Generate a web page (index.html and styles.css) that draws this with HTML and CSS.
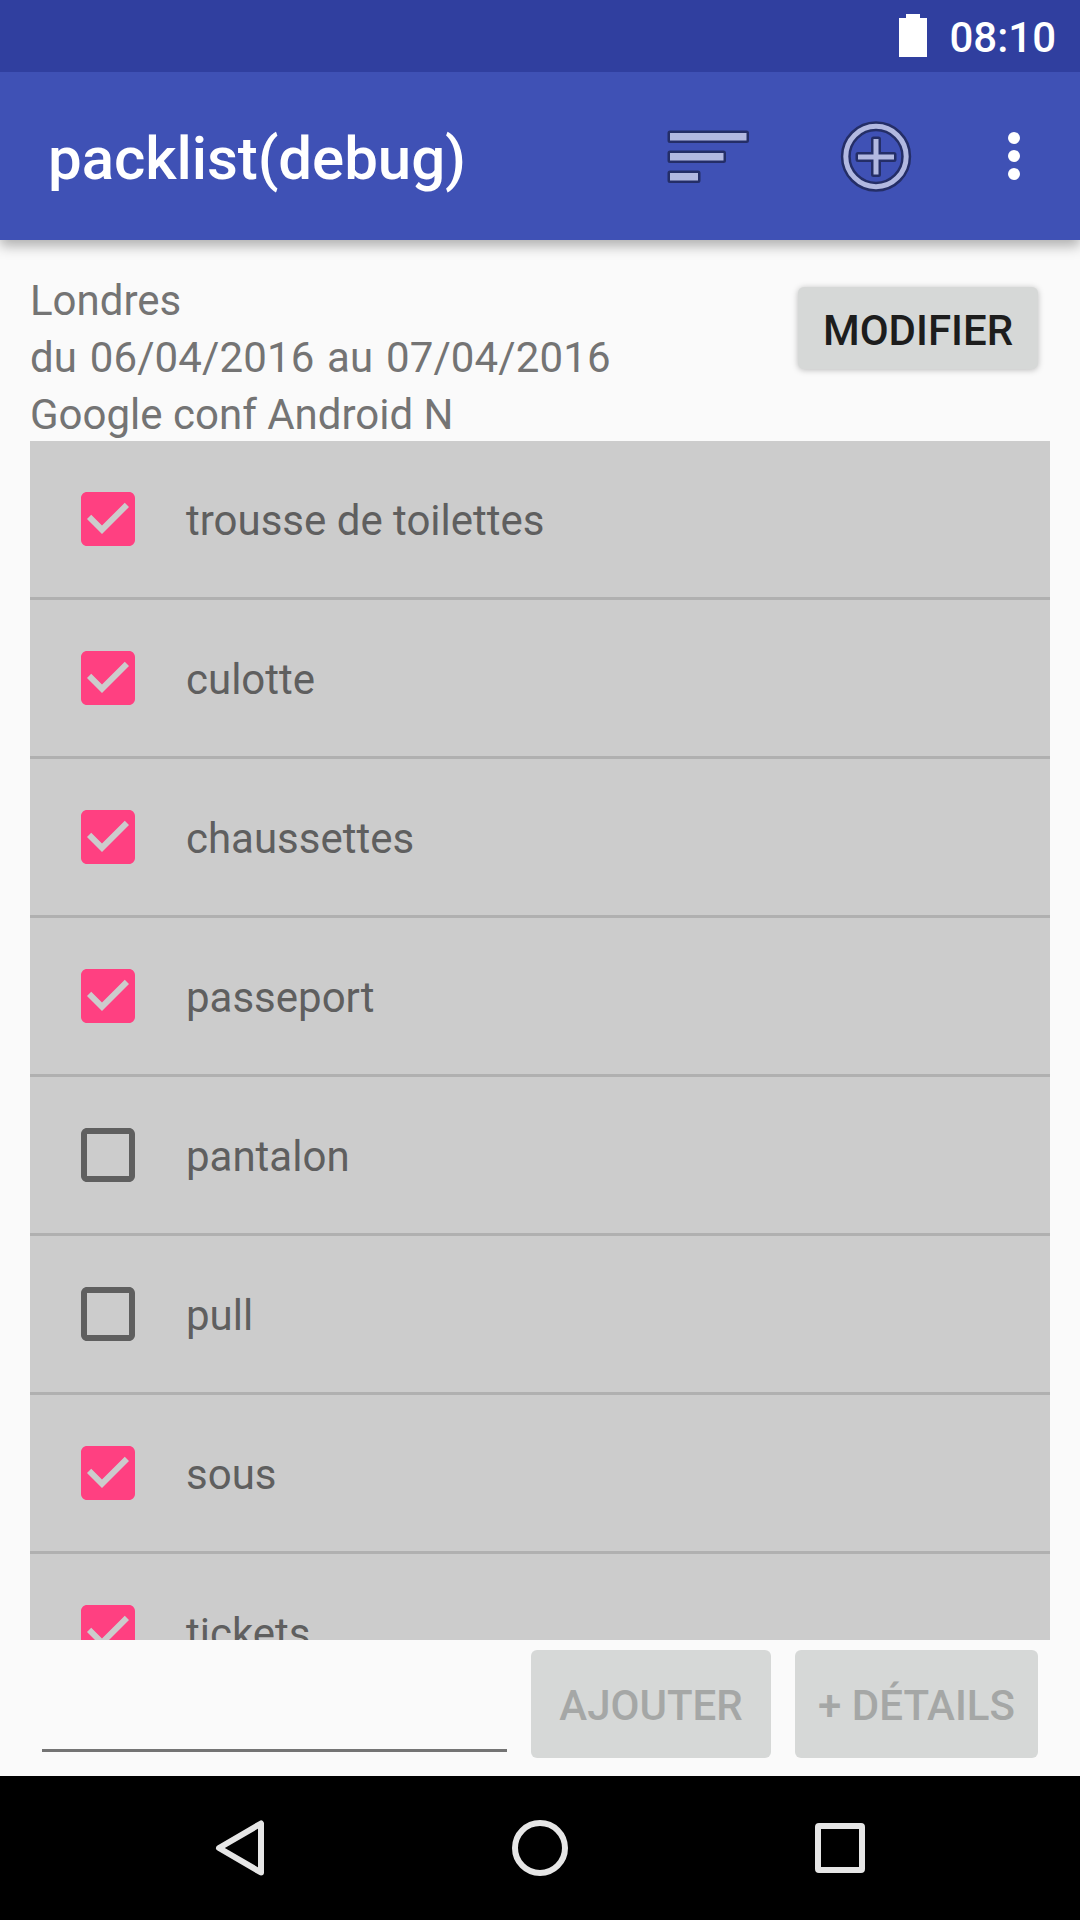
FILE: index.html
```html
<!DOCTYPE html>
<html lang="fr">
<head>
<meta charset="utf-8">
<title>packlist</title>
<link rel="stylesheet" href="styles.css">
</head>
<body>
<svg class="defs" aria-hidden="true">
  <symbol id="checked" viewBox="3 3 18 18"><path d="M19 3H5c-1.11 0-2 .9-2 2v14c0 1.1.89 2 2 2h14c1.11 0 2-.9 2-2V5c0-1.1-.89-2-2-2zm-9 14l-5-5 1.41-1.41L10 14.17l7.59-7.59L19 8z"/></symbol>
  <symbol id="unchecked" viewBox="3 3 18 18"><path d="M19 5v14H5V5h14m0-2H5c-1.1 0-2 .9-2 2v14c0 1.1.9 2 2 2h14c1.1 0 2-.9 2-2V5c0-1.1-.9-2-2-2z"/></symbol>
</svg>
<header class="status">
  <svg class="battery" viewBox="0 0 28 43"><path d="M7 0h14v4h7v39H0V4h7z"/></svg>
  <span class="clock">08:10</span>
</header>
<div class="appbar">
  <h1 class="title">packlist(debug)</h1>
  <svg class="sort" viewBox="0 0 84 56">
    <g class="outline"><path d="M4 5h76.500v7.500H4zM4 25h53.500v7.500H4zM4 45h28v7.500H4z"/></g>
    <path class="glyph" d="M4 5h76.500v7.500H4zM4 25h53.500v7.500H4zM4 45h28v7.500H4z"/>
  </svg>
  <svg class="add" viewBox="0 0 72 72">
    <circle class="ring-outline" cx="36" cy="36.500" r="30.200"/>
    <circle class="ring" cx="36" cy="36.500" r="30.200"/>
    <g class="outline"><path d="M33.500 19h5v15.500H54v5H38.500V54.500h-5V39.500H18v-5h15.500z"/></g>
    <path class="glyph" d="M33.500 19h5v15.500H54v5H38.500V54.500h-5V39.500H18v-5h15.500z"/>
  </svg>
  <svg class="more" viewBox="0 0 12 48"><circle cx="6" cy="6" r="6"/><circle cx="6" cy="24" r="6"/><circle cx="6" cy="42" r="6"/></svg>
</div>
<main class="content">
  <section class="trip">
    <p class="summary">Londres<br><span class="dates">du 06/04/2016 au 07/04/2016</span><br>Google conf Android N</p>
    <button class="button edit">MODIFIER</button>
  </section>
  <ul class="items">
    <li class="item"><svg class="box on"><use href="#checked"/></svg><span>trousse de toilettes</span></li>
    <li class="item"><svg class="box on"><use href="#checked"/></svg><span>culotte</span></li>
    <li class="item"><svg class="box on"><use href="#checked"/></svg><span>chaussettes</span></li>
    <li class="item"><svg class="box on"><use href="#checked"/></svg><span>passeport</span></li>
    <li class="item"><svg class="box"><use href="#unchecked"/></svg><span>pantalon</span></li>
    <li class="item"><svg class="box"><use href="#unchecked"/></svg><span>pull</span></li>
    <li class="item"><svg class="box on"><use href="#checked"/></svg><span>sous</span></li>
    <li class="item"><svg class="box on"><use href="#checked"/></svg><span>tickets</span></li>
  </ul>
  <form class="entry">
    <input class="field" type="text" aria-label="Article">
    <button class="button add-item" disabled>AJOUTER</button>
    <button class="button details" disabled>+ DÉTAILS</button>
  </form>
</main>
<nav class="navbar">
  <svg class="nav-icon" viewBox="0 0 56 56"><path d="M49 3.500V52.500L7 28z"/></svg>
  <svg class="nav-icon" viewBox="0 0 56 56"><circle cx="28" cy="28" r="25"/></svg>
  <svg class="nav-icon" viewBox="0 0 56 56"><rect x="6" y="6" width="44" height="44" rx="1"/></svg>
</nav>
</body>
</html>
```
FILE: styles.css
```css
* { box-sizing: border-box; }

body {
  margin: 0;
  width: 1080px;
  height: 1920px;
  overflow: hidden;
  display: flex;
  flex-direction: column;
  background: #fafafa;
  font-family: Roboto, "Liberation Sans", sans-serif;
  font-size: 42px;
}

svg { display: block; flex: none; }

.defs { position: absolute; width: 0; height: 0; }

.status {
  position: relative;
  z-index: 1;
  height: 72px;
  flex: none;
  padding-right: 24px;
  display: flex;
  justify-content: flex-end;
  background: #303f9f;
  color: #fff;
}

.battery { width: 28px; height: 43px; margin: 14px 22px 0 0; fill: #fff; }

.clock { font-weight: 500; line-height: 76px; }

.appbar {
  height: 168px;
  flex: none;
  padding: 0 60px 0 48px;
  display: flex;
  align-items: center;
  background: #3f51b5;
  color: #fff;
  box-shadow: 0 6px 12px rgba(0, 0, 0, .3);
}

.title {
  margin: 6px auto 0 0;
  font-size: 60px;
  font-weight: 500;
  line-height: 70px;
  letter-spacing: -.06px;
}

.sort { width: 84px; height: 56px; margin-right: 90px; }
.add { width: 72px; height: 72px; margin-right: 96px; }
.more { width: 12px; height: 48px; fill: #fff; }

.glyph { fill: #b2b9e1; }
.outline { fill: #242e67; stroke: #242e67; stroke-width: 5px; stroke-linejoin: round; }
.ring { fill: none; stroke: #b2b9e1; stroke-width: 5px; }
.ring-outline { fill: none; stroke: #242e67; stroke-width: 10px; }

.content {
  height: 1536px;
  padding: 33px 30px 0;
  display: flex;
  flex-direction: column;
}

.trip {
  height: 168px;
  flex: none;
  display: flex;
  justify-content: space-between;
}

.summary { margin: -1px 0 0; color: #747474; line-height: 57px; }

.dates { letter-spacing: .12px; word-spacing: 2.1px; }

.button {
  padding: 0;
  border: 0;
  border-radius: 6px;
  background: #d6d8d7;
  color: #1d1d1d;
  font: 500 42px Roboto, "Liberation Sans", sans-serif;
  white-space: nowrap;
}

.edit {
  width: 240px;
  height: 82px;
  margin: 14px 12px 0 0;
  padding-top: 4px;
  box-shadow: 0 1px 6px rgba(0, 0, 0, .26);
}

.items {
  height: 1199px;
  flex: none;
  margin: 0;
  padding: 0;
  overflow: hidden;
  list-style: none;
  background: #ccc;
  color: #5f5f5f;
}

.item {
  height: 159px;
  padding: 0 51px;
  display: flex;
  align-items: center;
  gap: 51px;
  border-bottom: 3px solid #b0b0b0;
}

.item span { padding-top: 3px; }

.box { width: 54px; height: 54px; fill: #5f5f5f; }
.box.on { fill: #ff4081; }

.entry {
  height: 136px;
  padding: 10px 12px 0;
  display: flex;
  align-items: flex-start;
}

.field {
  width: 465px;
  height: 102px;
  margin-right: 24px;
  padding: 0;
  border: 0;
  border-bottom: 3px solid #747474;
  background: none;
  font: inherit;
}

.button:disabled { height: 108px; color: #a5a7a6; padding-top: 2px; }
.add-item { width: 240px; margin-right: 24px; }
.details { width: 243px; }

.navbar {
  height: 144px;
  padding: 0 212px;
  display: flex;
  align-items: center;
  justify-content: space-between;
  background: #000;
}

.nav-icon {
  width: 56px;
  height: 56px;
  fill: none;
  stroke: #e6e6e6;
  stroke-width: 6px;
  stroke-linejoin: round;
}
```
